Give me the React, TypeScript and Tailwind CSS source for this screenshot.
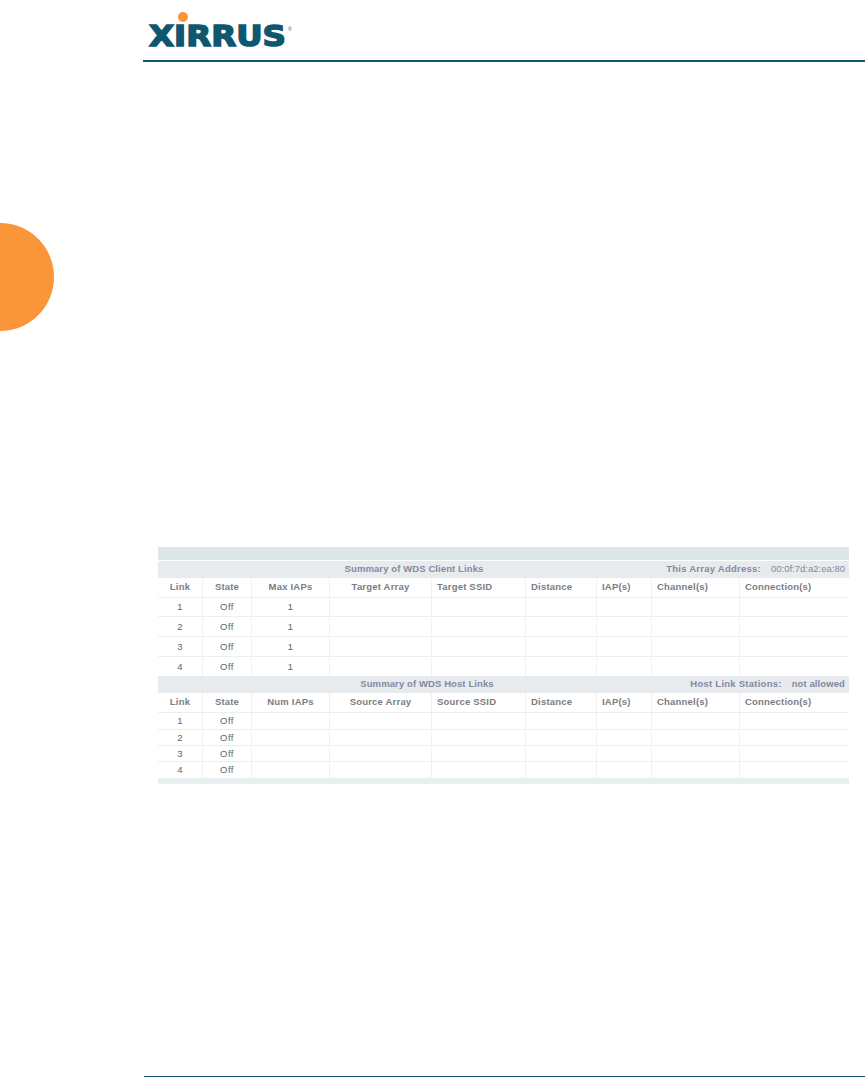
const COLS = 'grid grid-cols-[45px_49px_78px_102px_94px_71px_55px_88px_109px]';

function Band({ title, titleWidth, label, value, valueClass }: { title: string; titleWidth: string; label: string; value: string; valueClass: string }) {
  return (
    <div className="flex h-[17px] items-center whitespace-nowrap bg-[#e7ebed] text-[9.5px] font-bold text-[#8489a0]">
      <div className={`${titleWidth} shrink-0 text-center tracking-[0.1px]`}>{title}</div>
      <div className="-ml-5 flex flex-1 justify-end pr-1">
        <span className="tracking-[0.25px]">{label}</span>
        <span className={`ml-[10px] ${valueClass}`}>{value}</span>
      </div>
    </div>
  );
}

function HeaderRow({ labels }: { labels: string[] }) {
  return (
    <div className={`${COLS} h-5 whitespace-nowrap border-b border-[#eeeeee] text-[9.5px] font-bold tracking-[0.2px] text-[#7a7d84]`}>
      {labels.map((label, i) => (
        <div
          key={label}
          className={`flex items-center border-r border-[#f0f0f0] last:border-r-0 ${i < 4 ? 'justify-center' : 'justify-start pl-[5px]'}`}
        >
          {label}
        </div>
      ))}
    </div>
  );
}

function DataRow({ link, iaps, height, last }: { link: number; iaps?: string; height: string; last?: boolean }) {
  const cells = [String(link), 'Off', iaps ?? '', '', '', '', '', '', ''];
  return (
    <div className={`${COLS} ${height} text-[9.5px] text-[#5f6468] ${last ? '' : 'border-b border-[#eeeeee]'}`}>
      {cells.map((cell, i) => (
        <div key={i} className={`flex items-center justify-center border-r border-[#f0f0f0] last:border-r-0 ${i === 1 ? 'tracking-[0.5px]' : ''}`}>
          {cell}
        </div>
      ))}
    </div>
  );
}

export default function App() {
  return (
    <div className="flex h-[1077px] w-[865px] flex-col overflow-hidden bg-white font-['Liberation_Sans',Arial,sans-serif]">
      {/* Logo header */}
      <header className="ml-[143px] h-[62px] shrink-0 border-b-[2px] border-[#0f566f]">
        <svg width="160" height="60" viewBox="0 0 160 60" className="block">
          <circle cx="40" cy="17" r="5" fill="#fb953a" />
          <text
            x="6"
            y="45.5"
            fontFamily="'DejaVu Sans', sans-serif"
            fontWeight="700"
            fontSize="29"
            textLength="137"
            lengthAdjust="spacingAndGlyphs"
            fill="#0f566f"
            stroke="#0f566f"
            strokeWidth="1.5"
          >
            XIRRUS
          </text>
          <text x="145" y="31" fontFamily="'Liberation Sans', sans-serif" fontSize="5" fill="#0f566f">
            ®
          </text>
        </svg>
      </header>

      {/* Chapter tab */}
      <div className="mt-[161px] h-[108px] w-[54px] shrink-0 rounded-r-full bg-[#fb953a]" />

      {/* WDS summary */}
      <section className="ml-[158px] mt-[216px] w-[691px] shrink-0">
        <div className="mb-px h-[13px] bg-[#dfe6e9]" />
        <Band
          title="Summary of WDS Client Links"
          titleWidth="w-[512px]"
          label="This Array Address:"
          value="00:0f:7d:a2:ea:80"
          valueClass="font-normal"
        />
        <HeaderRow labels={['Link', 'State', 'Max IAPs', 'Target Array', 'Target SSID', 'Distance', 'IAP(s)', 'Channel(s)', 'Connection(s)']} />
        <DataRow link={1} iaps="1" height="h-[19px]" />
        <DataRow link={2} iaps="1" height="h-5 pt-px" />
        <DataRow link={3} iaps="1" height="h-5 pt-px" />
        <DataRow link={4} iaps="1" height="h-[19px] pt-px" last />

        <Band
          title="Summary of WDS Host Links"
          titleWidth="w-[538px]"
          label="Host Link Stations:"
          value="not allowed"
          valueClass="tracking-[0.1px]"
        />
        <HeaderRow labels={['Link', 'State', 'Num IAPs', 'Source Array', 'Source SSID', 'Distance', 'IAP(s)', 'Channel(s)', 'Connection(s)']} />
        <DataRow link={1} height="h-[17px]" />
        <DataRow link={2} height="h-4 pt-px" />
        <DataRow link={3} height="h-4 pt-px" />
        <DataRow link={4} height="h-4" last />
        <div className="h-[6px] bg-[#e9eef0]" />
      </section>

      {/* Footer rule */}
      <footer className="ml-[144px] mt-auto h-px shrink-0 bg-[#0f566f]" />
    </div>
  );
}
